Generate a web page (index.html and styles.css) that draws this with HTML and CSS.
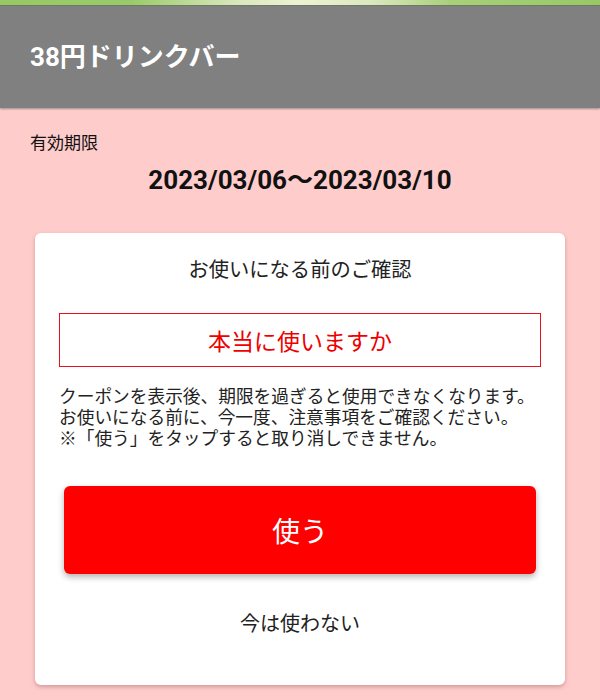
FILE: index.html
```html
<!DOCTYPE html>
<html lang="ja">
<head>
<meta charset="utf-8">
<link rel="stylesheet" href="styles.css">
</head>
<body>
<div class="topbar"></div>
<header class="header"><h1 class="title">38円ドリンクバー</h1></header>
<section class="period">
  <div class="period-label">有効期限</div>
  <div class="period-date">2023/03/06〜2023/03/10</div>
</section>
<main class="card">
  <div class="card-heading">お使いになる前のご確認</div>
  <div class="confirm-box">本当に使いますか</div>
  <p class="notes">クーポンを表示後、期限を過ぎると使用できなくなります。<br>お使いになる前に、今一度、注意事項をご確認ください。<br>※「使う」をタップすると取り消しできません。</p>
  <button class="use-btn">使う</button>
  <div class="cancel">今は使わない</div>
</main>
</body>
</html>
```
FILE: styles.css
```css
html, body {
  margin: 0;
  padding: 0;
}
body {
  background: #ffcccc;
  font-family: Roboto, "Noto Sans CJK JP", sans-serif;
  color: #222;
  width: 600px;
  height: 700px;
  overflow: hidden;
}
.topbar {
  height: 5px;
  background: linear-gradient(90deg, #98c866 0%, #9acb6a 22%, #dbe8c0 40%, #eef2d4 50%, #dbe8c0 62%, #a8d07a 75%, #98c866 100%);
  border-bottom: 1px solid #6f7d62;
}
.header {
  height: 102px;
  background: #808080;
  display: flex;
  align-items: center;
  padding-left: 30px;
  box-shadow: 0 1px 2px rgba(40, 60, 60, 0.45);
}
.title {
  margin: 0;
  color: #fff;
  font-size: 26px;
  font-weight: 700;
  line-height: 32px;
}
.period {
  padding: 23px 30px 0;
}
.period-label {
  font-size: 17px;
  line-height: 24px;
  color: #111;
}
.period-date {
  margin-top: 9px;
  text-align: center;
  font-size: 26px;
  line-height: 32px;
  font-weight: 700;
  color: #111;
}
.card {
  display: block;
  margin: 37px 35px 0;
  background: #fff;
  border-radius: 6px;
  box-shadow: 0 2px 4px rgba(120, 60, 60, 0.35);
  padding: 23px 24px 47px;
}
.card-heading {
  text-align: center;
  font-size: 20.3px;
  line-height: 28px;
  color: #222;
}
.confirm-box {
  margin-top: 29px;
  height: 52px;
  border: 1px solid #e8101c;
  display: flex;
  align-items: center;
  justify-content: center;
  color: #ee0000;
  font-size: 23px;
}
.notes {
  margin: 20px 0 0;
  font-size: 17.7px;
  line-height: 21px;
  color: #222;
  white-space: nowrap;
}
.use-btn {
  display: block;
  margin: 36px 5px 0;
  width: calc(100% - 10px);
  height: 88px;
  border: none;
  border-radius: 6px;
  background: #ff0000;
  color: #fff;
  font-family: Roboto, "Noto Sans CJK JP", sans-serif;
  font-size: 28px;
  box-shadow: 0 3px 6px rgba(0, 0, 0, 0.3);
}
.cancel {
  margin-top: 36px;
  text-align: center;
  font-size: 20px;
  line-height: 28px;
  color: #222;
}
```
